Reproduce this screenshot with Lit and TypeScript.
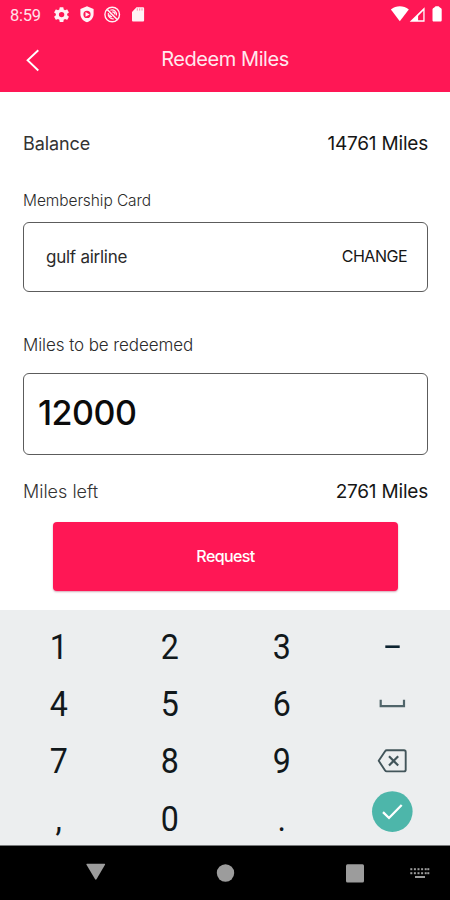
import { LitElement, html, css, svg } from "lit";
import { customElement, property } from "lit/decorators.js";

@customElement("status-bar")
class StatusBar extends LitElement {
  static styles = css`
    :host {
      display: flex;
      justify-content: space-between;
      height: 30px;
      color: #fff;
      font: 400 16.5px/31px Roboto, sans-serif;
    }
    .left {
      display: flex;
      padding-left: 10px;
    }
    .time {
      width: 41px;
      letter-spacing: -0.25px;
      opacity: 0.88;
    }
    svg {
      display: block;
    }
  `;
  render() {
    return html`
      <div class="left">
        <span class="time">8:59</span>
        <svg width="104" height="30" viewBox="51 0 104 30" fill="#fff" opacity=".94">
          <g transform="translate(52.6 5.6) scale(.75)">
            <path d="M19.4 13a7.500 7.500 0 0 0 0-2l2.100-1.600a.5.5 0 0 0 .1-.6l-2-3.500a.5.5 0 0 0-.6-.2l-2.500 1a7.300 7.300 0 0 0-1.700-1l-.4-2.600a.5.5 0 0 0-.5-.4h-4a.5.5 0 0 0-.5.400l-.4 2.600a7.300 7.300 0 0 0-1.700 1l-2.500-1a.5.5 0 0 0-.6.200l-2 3.500a.5.5 0 0 0 .1.600L4.400 11a7.500 7.500 0 0 0 0 2l-2.100 1.600a.5.5 0 0 0-.1.600l2 3.500c.1.200.4.300.6.200l2.500-1c.5.400 1.100.7 1.700 1l.4 2.600c0 .2.200.4.5.4h4c.300 0 .5-.2.5-.4l.4-2.600c.6-.3 1.200-.6 1.700-1l2.500 1c.2.100.5 0 .6-.2l2-3.500a.5.5 0 0 0-.1-.6zM12 15.600a3.600 3.600 0 1 1 0-7.200 3.600 3.600 0 0 1 0 7.200z"/>
          </g>
          <path fill-rule="evenodd" d="M87 6.300l6.600 2.600v5c0 4-2.800 7.200-6.600 8.300-3.800-1.100-6.600-4.300-6.600-8.300v-5zM87 10.800a3.600 3.600 0 1 0 0 7.200 3.600 3.600 0 0 0 0-7.200z"/>
          <path d="M85.500 12l4.200 2.400-4.200 2.400z"/>
          <g fill="none" stroke="#fff">
            <circle cx="112.200" cy="14.500" r="7.300" stroke-width="1.400"/>
            <path stroke-width="1.500" d="M107.300 9.600l9.900 9.900"/>
            <path stroke-width="1.200" d="M110.300 10.300c3.500-1.300 6.800 1.600 6.100 5.200M108.300 13c-.6 3.400 2.100 6.300 5.400 5.800M112.200 11.800c1.700 0 2.700 1.100 2.700 2.600M109.800 14.400c0 1.500 1 2.400 2.300 2.500"/>
          </g>
          <path d="M136.500 7.300h6.300c.8 0 1.300.5 1.300 1.300v11.700c0 .8-.5 1.300-1.300 1.300h-9.500c-.8 0-1.300-.5-1.300-1.300v-8.400z"/>
          <path stroke="#ff1755" stroke-opacity=".5" stroke-width="1" d="M137.300 8.300v2.300M139.700 8.300v2.300M142 8.300v2.300"/>
        </svg>
      </div>
      <svg width="60" height="30" viewBox="390 0 60 30" fill="#fff">
        <path d="M390.900 9.500c5.300-4.200 12.600-4.200 17.900 0l-9 11.800z"/>
        <path fill-rule="evenodd" d="M424.600 7.200v14.500h-14.900zM423.300 10.800l-5.200 5.300v4.200h5.200z"/>
        <path d="M434 7.700l1.600-1.400h3l1.600 1.400c1 .3 1.500.9 1.500 1.800v10.800c0 .8-.5 1.300-1.300 1.300h-6.600c-.8 0-1.300-.5-1.300-1.300v-10.800c0-.9.5-1.500 1.500-1.800z"/>
      </svg>
    `;
  }
}

@customElement("title-bar")
class TitleBar extends LitElement {
  @property() heading = "";
  static styles = css`
    :host {
      display: grid;
      grid-template-columns: 60px 1fr 60px;
      height: 62px;
      color: #fff;
      font: 400 20px/59px Inter, sans-serif;
      letter-spacing: -0.45px;
      text-align: center;
    }
    .heading {
      opacity: 0.9;
    }
  `;
  render() {
    return html`
      <svg width="60" height="62" viewBox="0 30 60 62">
        <path d="M38.300 50.200L27.600 60.300l10.700 10.200" fill="none" stroke="#fff" stroke-width="1.900"/>
      </svg>
      <span class="heading">${this.heading}</span>
    `;
  }
}

const icons: Record<string, unknown> = {
  minus: svg`<path d="M385.300 646.700h14.400" stroke="#0c2330" stroke-width="2.600"/>`,
  space: svg`<path d="M380.700 700v6.300h23.300v-6.300" stroke="#50656a" stroke-width="2.200" fill="none"/>`,
  erase: svg`<g fill="none" stroke="#42555a" stroke-width="1.900" stroke-linejoin="round"><path d="M386.700 750.700h17.300q1.700 0 1.700 1.700v17.700q0 1.700-1.700 1.700h-17.300q-1 0-1.600-.9l-6.400-9.700 6.400-9.600q.6-.9 1.600-.9z"/><path stroke-width="2.200" d="M389 756.700l9.200 9.200M398.200 756.700l-9.200 9.200"/></g>`,
  done: svg`<circle cx="392.300" cy="811.200" r="20.300" fill="#4db6aa"/><path d="M383 811.800l6 5.800 12.700-13" fill="none" stroke="#fff" stroke-width="2.300"/>`,
};

@customElement("num-pad")
class NumPad extends LitElement {
  static styles = css`
    :host {
      display: grid;
      grid-template-columns: repeat(4, 111.500px);
      grid-template-rows: repeat(4, 57.200px);
      box-sizing: border-box;
      height: 236px;
      padding: 9px 0 0 2.500px;
      overflow: hidden;
      background: #eceeef;
      border-bottom: 1px solid #77797a;
      color: #11181b;
      font: 400 35px/58px Roboto, sans-serif;
      text-align: center;
    }
    span {
      transform: scaleX(0.92);
    }
    svg {
      display: block;
    }
  `;
  render() {
    const rows = [
      ["1", "2", "3", "minus"],
      ["4", "5", "6", "space"],
      ["7", "8", "9", "erase"],
      [",", "0", ".", "done"],
    ];
    return rows.map((row, r) =>
      row.map((k) =>
        icons[k]
          ? html`<svg width="111.500" height="57.200" viewBox="${`337 ${619 + r * 57.2} 111.500 57.200`}" overflow="visible">${icons[k]}</svg>`
          : html`<span>${k}</span>`
      )
    );
  }
}

@customElement("nav-bar")
class NavBar extends LitElement {
  static styles = css`
    :host {
      display: block;
      height: 54px;
      background: #000;
    }
    svg {
      display: block;
    }
  `;
  render() {
    const dots = [411.2, 414.8, 418.4, 422, 425.6, 428.2];
    return html`<svg width="450" height="54" viewBox="0 846 450 54" fill="#9c9c9c">
      <path d="M87 863.700h17.500q.9.200.5 1l-8.500 14.500q-.7.900-1.400 0l-8.600-14.500q-.4-.8.500-1z"/>
      <circle cx="225.500" cy="873" r="8.700"/>
      <rect x="346" y="864.200" width="18" height="18.200" rx="1.500"/>
      ${dots.map((x) => svg`<rect x=${x - 0.9} y="868.200" width="2" height="2"/><rect x=${x - 0.9} y="872.200" width="2" height="2"/>`)}
      <rect x="415" y="876" width="10" height="2"/>
    </svg>`;
  }
}

@customElement("app-root")
class AppRoot extends LitElement {
  static styles = css`
    :host {
      display: flex;
      flex-direction: column;
      width: 450px;
      height: 900px;
      overflow: hidden;
      background: #fff;
      color: #2b2b2b;
      font: 400 18px/24px Inter, sans-serif;
    }
    header {
      height: 92px;
      background: #ff1755;
    }
    main {
      display: flex;
      flex-direction: column;
      box-sizing: border-box;
      height: 518px;
      padding: 40px 22px 0 23px;
    }
    .row {
      display: flex;
      justify-content: space-between;
      color: #333;
      font-size: 18px;
      letter-spacing: -0.1px;
    }
    .left {
      font-weight: 300;
      letter-spacing: 0;
    }
    .value {
      color: #161616;
      font-size: 19px;
      letter-spacing: -0.2px;
    }
    .label {
      font-size: 15.500px;
      font-weight: 350;
      letter-spacing: -0.08px;
    }
    .card-label {
      margin-top: 33px;
    }
    .label.miles-label {
      margin-top: 41px;
      font-size: 17px;
    }
    .box {
      display: flex;
      align-items: center;
      justify-content: space-between;
      box-sizing: border-box;
      border: 1.500px solid #5c5c5c;
      border-radius: 6px;
    }
    .card {
      height: 70px;
      margin-top: 9px;
      padding: 0 20px 1px 22px;
      font-size: 17px;
    }
    .airline {
      letter-spacing: -0.25px;
    }
    .change {
      margin-bottom: 1px;
      color: #161616;
      font-size: 16px;
      letter-spacing: -0.5px;
    }
    .amount {
      height: 82px;
      margin: 16px 0 25px;
      padding: 0 14px 2px;
      color: #0b0b0b;
      font-size: 34px;
      font-weight: 450;
      letter-spacing: -0.5px;
    }
    .request {
      display: block;
      width: 345px;
      height: 69px;
      margin: 18px 0 0 30px;
      padding: 0 0 2px;
      border: 0;
      border-radius: 4px;
      background: #ff1755;
      box-shadow: 0 1px 2px rgba(120, 0, 40, 0.35);
      color: #fff;
      font: 500 16px/20px Inter, sans-serif;
      letter-spacing: -0.6px;
    }
  `;
  render() {
    return html`
      <header>
        <status-bar></status-bar>
        <title-bar heading="Redeem Miles"></title-bar>
      </header>
      <main>
        <div class="row"><span class="balance">Balance</span><span class="value">14761 Miles</span></div>
        <div class="label card-label">Membership Card</div>
        <div class="box card"><span class="airline">gulf airline</span><span class="change">CHANGE</span></div>
        <div class="label miles-label">Miles to be redeemed</div>
        <div class="box amount"><span>12000</span></div>
        <div class="row"><span class="left">Miles left</span><span class="value">2761 Miles</span></div>
        <button class="request">Request</button>
      </main>
      <num-pad></num-pad>
      <nav-bar></nav-bar>
    `;
  }
}
